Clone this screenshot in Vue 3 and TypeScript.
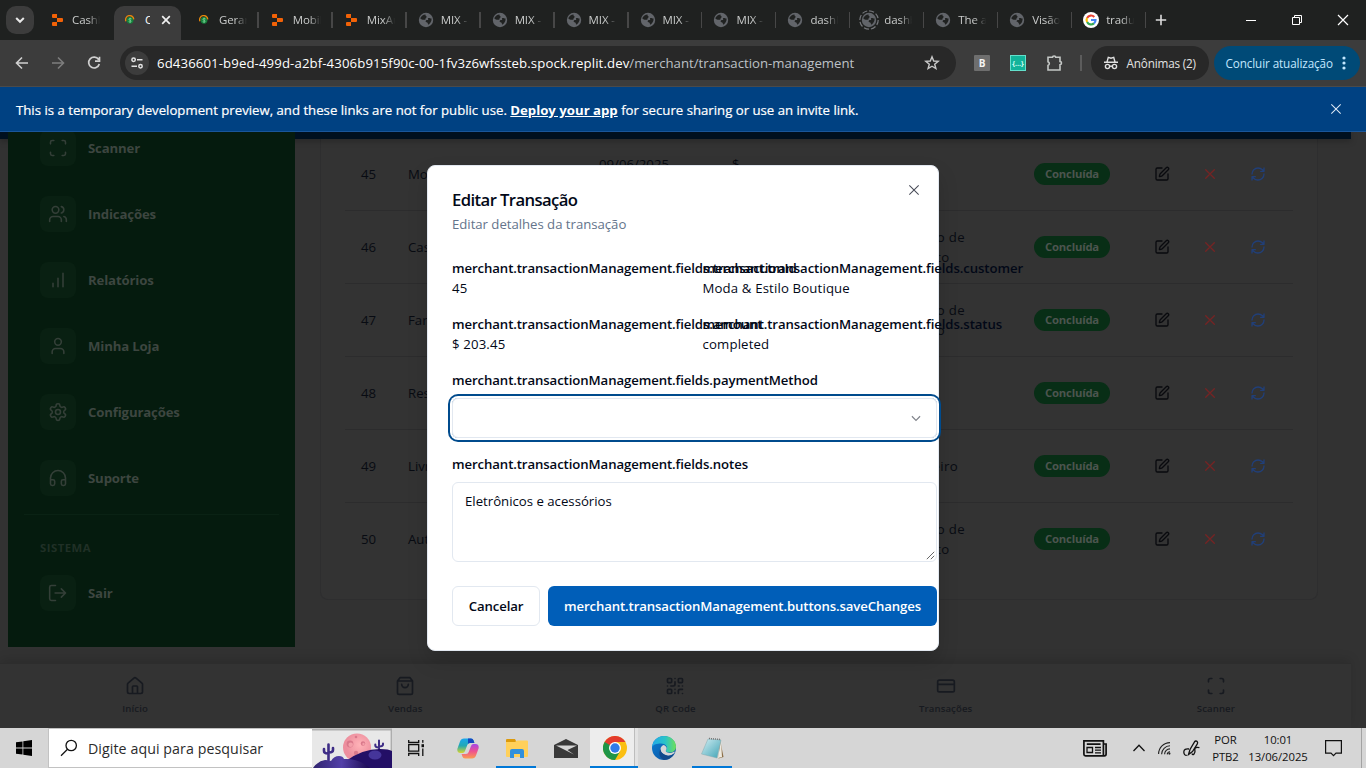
<script setup lang="ts">
interface Tab { icon: string; title: string; active?: boolean; ring?: boolean; noSep?: boolean }
interface Row { id: number; name: string; date?: string; amount?: string; method: string[] }

const icons: Record<string, string> = {
  scan: 'M3 7V5a2 2 0 0 1 2-2h2M17 3h2a2 2 0 0 1 2 2v2M21 17v2a2 2 0 0 1-2 2h-2M7 21H5a2 2 0 0 1-2-2v-2',
  users: 'M16 21v-2a4 4 0 0 0-4-4H6a4 4 0 0 0-4 4v2M13 7a4 4 0 1 1-8 0 4 4 0 1 1 8 0M22 21v-2a4 4 0 0 0-3-3.87M16 3.13a4 4 0 0 1 0 7.75',
  bars: 'M12 20V10M18 20V4M6 20v-4',
  user: 'M19 21v-2a4 4 0 0 0-4-4H9a4 4 0 0 0-4 4v2M16 7a4 4 0 1 1-8 0 4 4 0 1 1 8 0',
  settings: 'M12.22 2h-.44a2 2 0 0 0-2 2v.18a2 2 0 0 1-1 1.73l-.43.25a2 2 0 0 1-2 0l-.15-.08a2 2 0 0 0-2.73.73l-.22.38a2 2 0 0 0 .73 2.73l.15.1a2 2 0 0 1 1 1.72v.51a2 2 0 0 1-1 1.74l-.15.09a2 2 0 0 0-.73 2.73l.22.38a2 2 0 0 0 2.73.73l.15-.08a2 2 0 0 1 2 0l.43.25a2 2 0 0 1 1 1.73V20a2 2 0 0 0 2 2h.44a2 2 0 0 0 2-2v-.18a2 2 0 0 1 1-1.73l.43-.25a2 2 0 0 1 2 0l.15.08a2 2 0 0 0 2.73-.73l.22-.39a2 2 0 0 0-.73-2.73l-.15-.08a2 2 0 0 1-1-1.74v-.5a2 2 0 0 1 1-1.74l.15-.09a2 2 0 0 0 .73-2.73l-.22-.38a2 2 0 0 0-2.73-.73l-.15.08a2 2 0 0 1-2 0l-.43-.25a2 2 0 0 1-1-1.73V4a2 2 0 0 0-2-2zM15 12a3 3 0 1 1-6 0 3 3 0 1 1 6 0',
  headphones: 'M3 14h3a2 2 0 0 1 2 2v3a2 2 0 0 1-2 2H5a2 2 0 0 1-2-2v-7a9 9 0 0 1 18 0v7a2 2 0 0 1-2 2h-1a2 2 0 0 1-2-2v-3a2 2 0 0 1 2-2h3',
  exit: 'M9 3H4a2 2 0 0 0-2 2v14c0 1.1.9 2 2 2h5M16 17l5-5-5-5M20.8 12H8.5',
  house: 'M15 21v-8a1 1 0 0 0-1-1h-4a1 1 0 0 0-1 1v8M3 10a2 2 0 0 1 .709-1.528l7-5.999a2 2 0 0 1 2.582 0l7 5.999A2 2 0 0 1 21 10v9a2 2 0 0 1-2 2H5a2 2 0 0 1-2-2z',
  bag: 'M6 2 3 6v14a2 2 0 0 0 2 2h14a2 2 0 0 0 2-2V6l-3-4ZM3 6h18M16 10a4 4 0 0 1-8 0',
  qr: 'M4 3h3a1 1 0 0 1 1 1v3a1 1 0 0 1-1 1H4a1 1 0 0 1-1-1V4a1 1 0 0 1 1-1zM17 3h3a1 1 0 0 1 1 1v3a1 1 0 0 1-1 1h-3a1 1 0 0 1-1-1V4a1 1 0 0 1 1-1zM4 16h3a1 1 0 0 1 1 1v3a1 1 0 0 1-1 1H4a1 1 0 0 1-1-1v-3a1 1 0 0 1 1-1zM21 16h-3a2 2 0 0 0-2 2v3M21 21v.01M12 7v3a2 2 0 0 1-2 2H7M3 12h.01M12 3h.01M12 16v.01M16 12h1M21 12v.01M12 21v-1',
  card: 'M4 5h16a2 2 0 0 1 2 2v10a2 2 0 0 1-2 2H4a2 2 0 0 1-2-2V7a2 2 0 0 1 2-2zM2 10h20',
  pen: 'M12 3H5a2 2 0 0 0-2 2v14a2 2 0 0 0 2 2h14a2 2 0 0 0 2-2v-7M18.375 2.625a1 1 0 0 1 3 3l-9.013 9.014a2 2 0 0 1-.853.505l-2.873.84a.5.5 0 0 1-.62-.62l.84-2.873a2 2 0 0 1 .506-.852z',
  x: 'M18.500 5.500l-13 13M5.500 5.500l13 13',
  refresh: 'M3 12a9 9 0 0 1 9-9 9.75 9.75 0 0 1 6.74 2.74L21 8M21 3v5h-5M21 12a9 9 0 0 1-9 9 9.75 9.75 0 0 1-6.74-2.74L3 16M8 16H3v5',
}

const tabs: Tab[] = [
  { icon: 'replit', title: 'Cashback', noSep: true },
  { icon: 'coin', title: 'Ca', active: true },
  { icon: 'coin', title: 'Gerar' },
  { icon: 'replit', title: 'Mobile' },
  { icon: 'replit', title: 'MixAuto' },
  { icon: 'globe', title: 'MIX - A' },
  { icon: 'globe', title: 'MIX - A' },
  { icon: 'globe', title: 'MIX - A' },
  { icon: 'globe', title: 'MIX - A' },
  { icon: 'globe', title: 'MIX - A' },
  { icon: 'globe', title: 'dashboard' },
  { icon: 'globe', title: 'dashboard', ring: true },
  { icon: 'globe', title: 'The app' },
  { icon: 'globe', title: 'Visão' },
  { icon: 'google', title: 'tradutor' },
]

const menu = [
  { icon: 'scan', label: 'Scanner' },
  { icon: 'users', label: 'Indicações' },
  { icon: 'bars', label: 'Relatórios' },
  { icon: 'user', label: 'Minha Loja' },
  { icon: 'settings', label: 'Configurações' },
  { icon: 'headphones', label: 'Suporte' },
]

const rows: Row[] = [
  { id: 45, name: 'Moda & Estilo', date: '09/06/2025', amount: '$', method: ['Pix'] },
  { id: 46, name: 'Casa', method: ['Cartão de', 'Crédito'] },
  { id: 47, name: 'Farmácia', method: ['Cartão de', 'Débito'] },
  { id: 48, name: 'Restaurante', method: ['Pix'] },
  { id: 49, name: 'Livraria', method: ['Dinheiro'] },
  { id: 50, name: 'Auto', method: ['Cartão de', 'Crédito'] },
]

const bottomNav = [
  { icon: 'house', label: 'Início' },
  { icon: 'bag', label: 'Vendas' },
  { icon: 'qr', label: 'QR Code' },
  { icon: 'card', label: 'Transações' },
  { icon: 'scan', label: 'Scanner' },
]

const prefix = 'merchant.transactionManagement.'
const details = [
  { label: 'fields.transactionId', value: '45' },
  { label: 'fields.customer', value: 'Moda & Estilo Boutique' },
  { label: 'fields.amount', value: '$ 203.45' },
  { label: 'fields.status', value: 'completed' },
]
const notes = 'Eletrônicos e acessórios'
</script>

<template>
  <div class="screen">
    <!-- Tab strip -->
    <header class="tabstrip">
      <div class="tabsearch">
        <svg width="12" height="12" viewBox="0 0 12 12" fill="none" stroke="#e8e8e8" stroke-width="2"><path d="M2.2 4 6 7.8 9.8 4" /></svg>
      </div>
      <div class="tabs">
        <div v-for="(t, i) in tabs" :key="i" class="tab" :class="{ active: t.active, nosep: t.noSep || t.active }">
          <span class="fav">
            <svg v-if="t.icon === 'replit'" width="11" height="12" viewBox="0 0 11 12" fill="#f26207"><path d="M1 0h4v4H1a1 1 0 0 1-1-1V1a1 1 0 0 1 1-1zM5 4h5a1 1 0 0 1 1 1v2a1 1 0 0 1-1 1H5zM1 8h4v4H1a1 1 0 0 1-1-1V9a1 1 0 0 1 1-1z" /></svg>
            <svg v-else-if="t.icon === 'coin'" width="10" height="10" viewBox="0 0 10 10" fill="none"><circle cx="5" cy="5.300" r="3.400" fill="#16803c" /><path d="M.9 6.200a4.100 4.100 0 1 1 7.900-1.800" stroke="#e8880c" stroke-width="1.300" /><path d="M6.500 3.900C5.200 3 3.800 3.600 4 4.600c.3.900 2 .6 2.200 1.500.1 1-1.300 1.200-2.500.500M5.100 2.700v5.100" stroke="#7fd69b" stroke-width=".8" /></svg>
            <svg v-else-if="t.icon === 'globe'" width="20" height="20" viewBox="0 0 20 20" fill="none">
              <circle cx="10" cy="10" r="7.200" fill="#62656a" />
              <path d="M4.200 8.300c1.200-2.600 3-3.700 5.300-3.900-.2 1.500.9 1.500 1.200 2.300.2.900-1.300 1-1.200 2.200.1 1-1.700.9-2.800.8-1.200-.1-1.600-.8-2.500-1.400zM12 8.300c1.400-.6 1.900.3 3.600.3.100 3.200-1.400 5-3.400 6.200-.5-1.200-.1-1.900-1-2.400-.9-.4-1.800-.3-1.500-1.500.3-1 1.500-.5 2.300-.8.6-.3-.3-1.400 0-1.800z" fill="#202221" />
              <circle v-if="t.ring" cx="10" cy="10" r="9.200" stroke="#75777b" stroke-width="1.200" stroke-dasharray="5.200 2" />
            </svg>
            <svg v-else width="16" height="16" viewBox="0 0 16 16" fill="none"><circle cx="8" cy="8" r="8" fill="#fff" /><g stroke-width="2.200"><path d="M11.300 4.900A4.500 4.500 0 0 0 4.100 5.900" stroke="#ea4335" /><path d="M4.100 5.900a4.500 4.500 0 0 0 0 4.200" stroke="#fbbc05" /><path d="M4.100 10.100a4.500 4.500 0 0 0 6.900 1.300" stroke="#34a853" /><path d="M11 11.400A4.300 4.300 0 0 0 12.500 8H8" stroke="#4285f4" /></g></svg>
          </span>
          <span class="tabtitle">{{ t.title }}</span>
          <svg v-if="t.active" class="tabclose" width="10" height="10" viewBox="0 0 10 10" stroke="#f0f0f0" stroke-width="1.700"><path d="m1.200 1.200 7.600 7.600M8.800 1.200 1.200 8.800" /></svg>
        </div>
      </div>
      <svg class="plus" width="12" height="12" viewBox="0 0 12 12" stroke="#dcdcdc" stroke-width="1.600"><path d="M6 .8v10.400M.8 6h10.400" /></svg>
      <div class="winctl">
        <svg width="12" height="12" viewBox="0 0 12 12" stroke="#fff" fill="none"><path d="M1 6.500h10" /></svg>
        <svg width="12" height="12" viewBox="0 0 12 12" stroke="#fff" fill="none"><path d="M1.500 3.500h7v7h-7zM3.500 3.500v-2h7v7h-2" /></svg>
        <svg width="12" height="12" viewBox="0 0 12 12" stroke="#fff" stroke-width="1.200" fill="none"><path d="m1 1 10 10M11 1 1 11" /></svg>
      </div>
    </header>

    <!-- Address bar -->
    <div class="toolbar">
      <div class="navbtns">
        <svg width="16" height="16" viewBox="0 0 16 16" fill="none" stroke="#d0d0d0" stroke-width="1.600"><path d="M14 8H3M8 2.500 2.500 8 8 13.500" /></svg>
        <svg width="16" height="16" viewBox="0 0 16 16" fill="none" stroke="#7d7d7d" stroke-width="1.600"><path d="M2 8h11M8 2.500 13.500 8 8 13.500" /></svg>
        <svg width="16" height="16" viewBox="0 0 16 16" fill="none" stroke="#d0d0d0" stroke-width="1.700"><path d="M12.600 4.600A5.400 5.400 0 1 0 13.300 9M13.500 1.800v4.400H9" /></svg>
      </div>
      <div class="omnibox">
        <span class="tune">
          <svg width="14" height="14" viewBox="0 0 14 14" fill="none" stroke="#e3e3e3" stroke-width="1.500"><circle cx="3.600" cy="3.800" r="1.700" /><path d="M7 3.800h5.500M1.500 10.200H7" /><circle cx="10.500" cy="10.200" r="1.700" /></svg>
        </span>
        <span class="url"><b>6d436601-b9ed-499d-a2bf-4306b915f90c-00-1fv3z6wfssteb.spock.replit.dev</b>/merchant/transaction-management</span>
        <svg class="star" width="16" height="16" viewBox="0 0 16 16" fill="none" stroke="#c8c8c8" stroke-width="1.400"><path d="m8 1.800 1.700 4.200 4.500.3-3.500 2.900 1.200 4.400L8 11.200l-3.900 2.400 1.200-4.400-3.500-2.900 4.500-.3z" /></svg>
      </div>
      <div class="exts">
        <span class="extb">B</span>
        <span class="extj">{...}</span>
        <svg width="18" height="18" viewBox="0 0 18 18" fill="none" stroke="#c4c7c5" stroke-width="1.600"><path d="M2 3.300h4.500a1.600 1.300 0 0 1 3.200 0h4.300v4.200a1.500 1.600 0 0 1 0 3.200v5.300H2v-4.600a2 1.900 0 0 0 0-3.600z" /></svg>
      </div>
      <i class="vsep"></i>
      <div class="incog">
        <svg width="16" height="16" viewBox="0 0 16 16" fill="none" stroke="#e0e0e0" stroke-width="1.400"><path d="M1 7.200h14M4 7l1.300-4.600 2.700.8 2.700-.8L12 7" /><circle cx="4.500" cy="11.500" r="2.100" /><circle cx="11.500" cy="11.500" r="2.100" /><path d="M6.600 11.200h2.800" /></svg>
        <span>Anônimas (2)</span>
      </div>
      <div class="update"><span>Concluir atualização</span>
        <svg width="4" height="16" viewBox="0 0 4 16" fill="#c2e7ff"><circle cx="2" cy="3" r="1.600" /><circle cx="2" cy="8" r="1.600" /><circle cx="2" cy="13" r="1.600" /></svg>
      </div>
    </div>

    <!-- Preview banner -->
    <div class="banner">
      <span>This is a temporary development preview, and these links are not for public use. <a>Deploy your app</a> for secure sharing or use an invite link.</span>
      <svg width="16" height="16" viewBox="0 0 24 24" fill="none" stroke="#dce8f5" stroke-width="1.800"><path d="M20 4 4 20M4 4l16 16" /></svg>
    </div>

    <!-- Dimmed page -->
    <div class="page">
      <div class="topline"></div>
      <aside class="sidebar">
        <div v-for="m in menu" :key="m.label" class="mitem">
          <span class="mbox"><svg width="20" height="20" viewBox="0 0 24 24" class="stroke"><path :d="icons[m.icon]" /></svg></span>
          <span>{{ m.label }}</span>
        </div>
        <hr />
        <h4>SISTEMA</h4>
        <div class="mitem">
          <span class="mbox"><svg width="20" height="20" viewBox="0 0 24 24" class="stroke"><path :d="icons.exit" /></svg></span>
          <span>Sair</span>
        </div>
      </aside>
      <main class="card">
        <div v-for="r in rows" :key="r.id" class="row">
          <span>{{ r.id }}</span>
          <span>{{ r.name }}</span>
          <span>{{ r.date }}<br v-if="r.date" />&nbsp;</span>
          <span>{{ r.amount }}<br v-if="r.amount" />&nbsp;</span>
          <span class="method"><template v-for="(l, i) in r.method" :key="l"><br v-if="i" />{{ l }}</template></span>
          <span><em class="badge">Concluída</em></span>
          <span class="acts">
            <svg width="16" height="16" viewBox="0 0 24 24" class="stroke edit"><path :d="icons.pen" /></svg>
            <svg width="16" height="16" viewBox="0 0 24 24" class="stroke del"><path :d="icons.x" /></svg>
            <svg width="16" height="16" viewBox="0 0 24 24" class="stroke ref"><path :d="icons.refresh" /></svg>
          </span>
        </div>
      </main>
      <nav class="bottomnav">
        <div v-for="n in bottomNav" :key="n.label">
          <svg width="20" height="20" viewBox="0 0 24 24" class="stroke"><path :d="icons[n.icon]" /></svg>
          <span>{{ n.label }}</span>
        </div>
      </nav>
    </div>

    <!-- Edit dialog -->
    <section class="dialog">
      <svg class="dclose" width="16" height="16" viewBox="0 0 24 24" fill="none" stroke="#4a4d5a" stroke-width="1.800"><path d="M20 4 4 20M4 4l16 16" /></svg>
      <h2>Editar Transação</h2>
      <p class="desc">Editar detalhes da transação</p>
      <div class="details">
        <div v-for="d in details" :key="d.label">
          <label>{{ prefix }}{{ d.label }}</label>
          <p>{{ d.value }}</p>
        </div>
      </div>
      <label class="solo">{{ prefix }}fields.paymentMethod</label>
      <div class="select">
        <svg width="16" height="16" viewBox="0 0 24 24" fill="none" stroke="#80838b" stroke-width="2"><path d="m5 9 7 7 7-7" /></svg>
      </div>
      <label class="solo">{{ prefix }}fields.notes</label>
      <div class="notes">{{ notes }}
        <svg width="9" height="9" viewBox="0 0 9 9" stroke="#555" stroke-width=".9"><path d="M.8 8.200 8.200.8M4.800 8.200l3.400-3.400" /></svg>
      </div>
      <footer>
        <button class="cancel">Cancelar</button>
        <button class="save">{{ prefix }}buttons.saveChanges</button>
      </footer>
    </section>

    <!-- Taskbar -->
    <div class="taskbar">
      <div class="start"><svg width="16" height="16" viewBox="0 0 16 16"><path d="M0 2.300 6.500 1.400v6.200H0zM7.300 1.300 16 0v7.600H7.300zM0 8.400h6.500v6.200L0 13.700zM7.300 8.400H16V16l-8.700-1.300z" /></svg></div>
      <div class="search">
        <svg width="18" height="18" viewBox="0 0 18 18" fill="none" stroke="#111" stroke-width="1.300"><circle cx="11.200" cy="6.500" r="5.200" /><path d="M7.500 10.300 1 16.800" /></svg>
        <span>Digite aqui para pesquisar</span>
        <svg class="scene" width="80" height="39" viewBox="0 0 80 39">
          <defs>
            <radialGradient id="moon" cx=".6" cy=".4"><stop offset="0" stop-color="#ffb3b8" /><stop offset="1" stop-color="#ed8f9e" /></radialGradient>
            <linearGradient id="hill"><stop offset="0" stop-color="#30246f" /><stop offset=".5" stop-color="#5340a8" /><stop offset="1" stop-color="#1b0951" /></linearGradient>
          </defs>
          <path d="M0 0h80v39H0z" fill="#e8e8e8" /><path d="M0 .7h79.300V39" fill="none" stroke="#adadad" stroke-width="1.400" />
          <circle cx="45" cy="18.500" r="14" fill="url(#moon)" />
          <g fill="#d9788b"><circle cx="38" cy="15" r="3.400" /><circle cx="51" cy="14.500" r="2.200" /><circle cx="44" cy="8" r="1.300" /><circle cx="44" cy="24" r="2.200" /></g>
          <g fill="#f4a0aa"><circle cx="38.700" cy="15.800" r="2.300" /><circle cx="51.500" cy="15" r="1.200" /></g>
          <g fill="none" stroke="#3e2d86" stroke-width="3" stroke-linecap="round"><path d="M16.500 15.500V31M12 20v2q0 2.500 4 2.500M21 19v2q0 2.500-4 2.500" stroke-width="2.600" /><path d="M67 11.500V24M63.300 15.500v1q0 2 3.700 2M71 14.500v1q0 2-4 2" stroke-width="2" /></g>
          <path d="M34 32Q50 20 68 20q9 0 12 2v17H34z" fill="#230f66" />
          <ellipse cx="63" cy="26" rx="6.500" ry="4.500" fill="#45359a" />
          <path d="M1 39q5-7 12-8 4 0 6 1 3-5 8-5 4 0 5 3 14-1 26 9z" fill="url(#hill)" />
        </svg>
      </div>
      <div class="apps">
        <span class="app view"><svg width="16" height="16" viewBox="0 0 16 16" fill="none" stroke="#111" stroke-width="1.300"><path d="M.7 0v2.500h10V0M.7 16v-2.500h10V16M.7 4.700h10v6.500H.7zM14.800 0v2.800M14.800 8.500V16" /><path d="M13.500 4.200H16v3h-2.500z" fill="#111" stroke="none" /></svg></span>
        <span class="app">
          <svg width="22" height="21" viewBox="0 0 22 21">
            <defs>
              <linearGradient id="cpA" x1="0" y1="0" x2="0" y2="1"><stop offset="0" stop-color="#1aa7ee" /><stop offset=".5" stop-color="#22a8b4" /><stop offset="1" stop-color="#d8d52c" /></linearGradient>
              <linearGradient id="cpB" x1="0" y1="0" x2="0" y2="1"><stop offset="0" stop-color="#a646e8" /><stop offset=".5" stop-color="#ee5290" /><stop offset="1" stop-color="#fb9c50" /></linearGradient>
            </defs>
            <path d="M7 .5h7q2 0 2.600 2L17.400 5H13q-2 0-2.700 2L8 13q-.6 2-2.500 2H3.500Q0 15 .3 11L3 3.500Q4 .5 7 .5z" fill="url(#cpA)" />
            <path d="M11 .5h3q2 0 2.600 2L17.400 5H13q-1.500 0-2 1z" fill="#1548bf" />
            <path d="M15 20.500H8q-2 0-2.600-2L4.600 16H9q2 0 2.700-2L14 8q.6-2 2.500-2h2q3.500 0 3.200 4L19 17.500q-1 3-4 3z" fill="url(#cpB)" />
          </svg>
        </span>
        <span class="app open">
          <svg width="22" height="19" viewBox="0 0 22 19"><path d="M0 1q0-1 1-1h8l1.500 3H0z" fill="#dc9a0c" /><path d="M0 3h9l2-1.500h10q1 0 1 1V17q0 1-1 1H1q-1 0-1-1z" fill="#ffd05a" /><path d="M4 19v-7q0-2 2-2h10q2 0 2 2v7h-4v-4H8v4z" fill="#3190dc" /></svg>
        </span>
        <span class="app"><svg width="24" height="19" viewBox="0 0 24 19"><path d="M0 6 12 0l12 6v13H0z" fill="#393939" /><path d="M2 6.500h21L13.500 11l6.500 4.500z" fill="#d6d6d6" /></svg></span>
        <span class="app current open">
          <svg width="24" height="24" viewBox="0 0 24 24"><circle cx="12" cy="12" r="12" fill="#fbbf12" /><path d="M1.600 6A12 12 0 0 1 22.400 6H12L7 14.500z" fill="#e33b2e" /><path d="M1.600 6A12 12 0 0 0 12 24l5.200-9L12 17z" fill="#1e9547" /><path d="M1.600 6 7 15l5-3z" fill="#1e9547" /><circle cx="12" cy="12" r="6" fill="#fff" /><circle cx="12" cy="12" r="4.700" fill="#2f7bea" /></svg>
        </span>
        <span class="app">
          <svg width="24" height="24" viewBox="0 0 24 24">
            <defs>
              <linearGradient id="eA"><stop offset="0" stop-color="#23a9e8" /><stop offset=".55" stop-color="#2ac3c8" /><stop offset="1" stop-color="#6ee058" /></linearGradient>
              <linearGradient id="eB" x1="0" y1="0" x2="1" y2="1"><stop offset="0" stop-color="#0c7fd4" /><stop offset="1" stop-color="#0b4f9c" /></linearGradient>
            </defs>
            <circle cx="12" cy="12" r="12" fill="url(#eB)" />
            <path d="M0 11C1 4 6 0 12 0c7 0 12 5 12 10.500 0 4-3 6-6.500 6-3 0-4.300-1.200-3.500-2.400 2.500-3-.5-6.600-5-6.600C5 7.500 1.200 8.500 0 11z" fill="url(#eA)" />
            <path d="M8.500 13c.2-2 1.500-3.600 3.300-4 2.600 1 3.600 3.500 2.200 5.100-.8 1.200.5 2.900 3.500 2.900 2 0 3.800-.6 5-1.500.3.300.2 1-.3 1.800-2 2.200-5 2.700-7.200 2.200C11 18.600 8.500 16 8.500 13z" fill="#d6d6d6" />
            <path d="M8.500 13c0 3 2.500 5.600 6.500 6.500 2.200.5 5.200 0 7.200-2.200C20 21.500 16 24 12 24c-4-2-6-6-3.500-11z" fill="#114a8b" />
          </svg>
        </span>
        <span class="app open">
          <svg width="24" height="22" viewBox="0 0 24 22"><defs><linearGradient id="np" x1="0" y1="0" x2="1" y2="1"><stop offset="0" stop-color="#d3eef3" /><stop offset="1" stop-color="#3fa3b5" /></linearGradient></defs><path d="M19 2l3.500 18-5 1.500z" fill="#8d7049" /><path d="M20 3l1 17-4 1z" fill="#eeeae0" /><path d="M7 2l13 1-4 18L.5 17z" fill="url(#np)" stroke="#84aab1" stroke-width=".5" /><path d="M8 1.500l12 1" stroke="#767676" stroke-width="1.500" stroke-dasharray="1 1" /></svg>
        </span>
      </div>
      <div class="tray">
        <svg class="t1" width="24" height="17" viewBox="0 0 24 17" fill="none" stroke="#111" stroke-width="1.700"><path d="M.9.900h19.500v15H2.500q-1.600 0-1.600-1.600zM20.400 4h2.700v10q0 1.900-1.700 1.900h-3M3.800 4.200h13.800" /><path d="M4 7.500h5.500v5H4zM12 7.500h6M12 10.200h6M12 12.800h6" stroke-width="1.300" /></svg>
        <svg class="t2" width="12" height="8" viewBox="0 0 12 8" fill="none" stroke="#111" stroke-width="1.300"><path d="M.5 7 6 1.300 11.500 7" /></svg>
        <svg class="t3" width="13" height="13" viewBox="0 0 13 13" fill="none" stroke="#222" stroke-width="1.100"><path d="M.6 12A11.500 11.500 0 0 1 12 .6M3.600 12.200A8.500 8.500 0 0 1 12 3.800M6.600 12.200A5.500 5.500 0 0 1 12 6.900M9.200 12.400A3 3 0 0 1 12 9.700" /><circle cx="11.400" cy="11.600" r="1.100" fill="#222" stroke="none" /></svg>
        <svg class="t4" width="17" height="17" viewBox="0 0 17 17" fill="none" stroke="#111" stroke-width="1.300"><path d="M5.500 14.500 7 9.500l4.500-7.700q1.300-1.500 2.700-.2.900 1.200 0 2.500L9.500 11.500zM6 9Q1 8.200.8 12q.2 3.500 3 3.300M9 13.500q.5 2 2 .5 1.500-2 .8-5.500 1.700-1.800 4.600-.8" /></svg>
        <div class="clock lang"><span>POR</span><span>PTB2</span></div>
        <div class="clock time"><span>10:01</span><span>13/06/2025</span></div>
        <svg class="t5" width="17" height="17" viewBox="0 0 17 17" fill="none" stroke="#111" stroke-width="1.200"><path d="M.6.600h15.800v12.500H11l-2.500 2.600L6 13.100H.6z" /></svg>
        <i></i>
      </div>
    </div>
  </div>
</template>

<style>
body { margin: 0; overflow: hidden; }
</style>

<style scoped>
* { box-sizing: border-box; }
.screen {
  position: relative; width: 1366px; height: 768px; overflow: hidden;
  display: flex; flex-direction: column; background: #333;
  font-family: "Open Sans", "Noto Sans", sans-serif; font-size: 13.2px; color: #020817;
}
svg { display: block; flex: none; }
h2, h4, p { margin: 0; }
.stroke { fill: none; stroke: currentColor; stroke-width: 2; stroke-linecap: round; stroke-linejoin: round; }

.tabstrip { height: 40px; flex: none; display: flex; align-items: center; background: #1f2120; }
.tabsearch { width: 28px; height: 28px; margin-left: 6px; border-radius: 10px; background: #3c3c3c; display: flex; align-items: center; justify-content: center; }
.tabs { display: flex; height: 40px; margin-left: 3px; width: 1108px; }
.tab { position: relative; flex: 1 1 0; min-width: 0; display: flex; align-items: center; padding-left: 10px; font-size: 11.500px; letter-spacing: -.1px; color: #c9cbca; }
.tab::after { content: ""; position: absolute; right: -1px; top: 12px; width: 1.500px; height: 16px; background: #474747; }
.tab.nosep::after { display: none; }
.fav { width: 20px; display: flex; justify-content: center; }
.tabtitle { margin-left: 5px; width: 29px; overflow: hidden; white-space: nowrap; line-height: 16px; -webkit-mask-image: linear-gradient(90deg, #000 55%, transparent 97%); mask-image: linear-gradient(90deg, #000 55%, transparent 97%); }
.tab.active { z-index: 1; padding-left: 9px; color: #fff; }
.tab.active::before { content: ""; position: absolute; z-index: -1; left: 3px; right: 3px; top: 6px; bottom: 0; border-radius: 10px 10px 0 0; background: #3c3c3c; }
.tab.active .tabtitle { width: 5px; -webkit-mask-image: none; mask-image: none; }
.tabclose { margin-left: 11px; }
.plus { margin-left: 10px; }
.winctl { margin-left: auto; margin-right: 17px; display: flex; gap: 34px; }

.toolbar { height: 47px; flex: none; display: flex; align-items: center; background: #3c3c3c; border-bottom: 1px solid #4a4a4a; color: #e3e3e3; }
.navbtns { display: flex; gap: 20px; margin-left: 14px; width: 106px; flex: none; }
.omnibox { width: 836px; flex: none; height: 34px; border-radius: 17px; background: #282828; display: flex; align-items: center; }
.tune { width: 24px; height: 24px; margin-left: 5px; border-radius: 12px; background: #3c3c3c; display: flex; align-items: center; justify-content: center; }
.url { margin-left: 8px; white-space: nowrap; color: #bdc1c6; }
.url b { font-weight: 400; color: #fff; letter-spacing: .11px; }
.star { margin-left: auto; margin-right: 16px; }
.exts { display: flex; align-items: center; gap: 20px; margin-left: 18px; }
.extb, .extj { width: 16px; height: 16px; display: flex; align-items: center; justify-content: center; font-weight: 700; }
.extb { background: #6e6e6e; border-radius: 1px; font-size: 10px; color: #f4f4f4; }
.extj { background: #12b39a; border: 1px solid #63dfcb; font-size: 7px; color: #d8fff8; }
.vsep { width: 1.500px; height: 16px; margin-left: 16px; background: #5c5c5c; }
.incog { margin-left: 9px; width: 118px; height: 34px; border-radius: 17px; background: #282828; display: flex; align-items: center; padding-left: 12px; gap: 8px; font-size: 11.700px; letter-spacing: -.15px; white-space: nowrap; }
.update { margin-left: 5px; width: 146px; height: 34px; border-radius: 17px; background: #004a77; display: flex; align-items: center; justify-content: space-between; padding: 0 14px 0 12px; color: #c2e7ff; font-size: 11.700px; letter-spacing: -.1px; white-space: nowrap; }

.banner { height: 45px; flex: none; display: flex; align-items: center; justify-content: space-between; padding: 0 22px 0 16px; background: #004182; border-bottom: 1px solid #1a569a; color: #fff; font-weight: 500; white-space: nowrap; -webkit-text-stroke: .2px #fff; }
.banner span { padding-top: 2px; }
.banner svg { width: 14px; height: 14px; margin-right: 1px; }
.banner a { font-weight: 700; text-decoration: underline; -webkit-text-stroke: 0; }

.page { position: relative; height: 596px; flex: none; overflow: hidden; display: flex; align-items: flex-start; background: #323232; }
.topline { position: absolute; z-index: 1; left: 0; top: 0; width: 1351px; height: 7px; background: #00101f; box-shadow: 0 2px 6px rgba(0, 0, 0, .25); }
.sidebar { position: relative; z-index: 2; width: 287px; height: 515px; margin-left: 8px; overflow: hidden; background: #051b0e; color: #3d4640; font-weight: 700; letter-spacing: -.15px; }
.mitem { display: flex; align-items: center; gap: 12px; height: 36px; margin: 0 0 30px 32px; }
.mitem:first-child { margin-top: -2px; }
.mbox { width: 36px; height: 36px; border-radius: 8px; background: #092012; display: flex; align-items: center; justify-content: center; color: #343f38; }
.mbox svg { stroke-width: 1.900; }
.sidebar hr { margin: -12px 16px 0; border: 0; height: 1px; background: #0a2214; }
.sidebar h4 { margin: 24px 0 19px 32px; font-size: 11.300px; line-height: 17px; font-weight: 700; letter-spacing: .5px; color: #203026; }
.card { width: 998px; height: 468px; margin-left: 25px; padding: 6px 24px 0; border: 1px solid #2e2e2f; border-top: 0; border-radius: 0 0 8px 8px; background: #333; color: #080b12; }
.row { display: grid; grid-template-columns: 47px 191px 133px 169px 133px 120px 1fr; align-items: center; height: 73px; border-bottom: 1px solid #2c2c2d; line-height: 20px; white-space: nowrap; }
.row:last-child { height: 72px; border: 0; }
.row > span { padding-left: 16px; }
.row > .method { padding-left: 17px; letter-spacing: .35px; }
.badge { display: inline-flex; align-items: center; justify-content: center; vertical-align: middle; width: 76px; height: 22px; border-radius: 11px; background: #082e16; color: #4c554f; font-style: normal; font-weight: 700; font-size: 11.300px; letter-spacing: -.2px; }
.acts { display: flex; gap: 32px; }
.edit { color: #090a0e; }
.del { color: #742424; }
.ref { color: #213f78; }
.bottomnav { position: absolute; z-index: 1; left: 0; bottom: 0; width: 1351px; height: 65px; display: grid; grid-template-columns: repeat(5, 1fr); background: #333; border-top: 1px solid #2d2d2d; box-shadow: 0 -4px 10px rgba(0, 0, 0, .12); color: #171a20; }
.bottomnav div { display: flex; flex-direction: column; align-items: center; padding-top: 12px; font-size: 9.600px; font-weight: 600; line-height: 14px; gap: 6px; letter-spacing: .1px; }

.dialog { position: absolute; z-index: 3; left: 427px; top: 165px; width: 512px; height: 486px; border: 1px solid #e2e8f0; border-radius: 8px; background: #fff; padding: 24px; box-shadow: 0 10px 20px rgba(0, 0, 0, .15); white-space: nowrap; line-height: 20px; }
.dialog > * { width: 485px; }
.dialog .dclose { position: absolute; right: 17px; top: 17px; width: 14px; height: 14px; }
.dialog h2 { font-size: 16.700px; line-height: 20px; font-weight: 600; letter-spacing: -.6px; }
.desc { margin-top: 4px; color: #64748b; letter-spacing: -.03px; }
.details { display: grid; grid-template-columns: 1fr 1fr; gap: 16px; margin-top: 24px; }
.details > div { min-width: 0; }
.details p { letter-spacing: .15px; }
label { display: block; font-weight: 600; letter-spacing: -.1px; }
.details + .solo { margin-top: 16px; }
.select { height: 40px; margin-top: 8px; border: 1px solid #e2e8f0; border-radius: 6px; box-shadow: 0 0 0 2px #fff, 0 0 0 4px #004b8d; display: flex; align-items: center; justify-content: flex-end; padding-right: 13px; }
.select svg { width: 14px; height: 14px; }
.select + .solo { margin-top: 16px; }
.notes { position: relative; height: 80px; margin-top: 8px; border: 1px solid #e2e8f0; border-radius: 6px; padding: 8px 12px; }
.notes svg { position: absolute; right: 1px; bottom: 1px; }
footer { display: flex; gap: 8px; margin-top: 24px; }
button { height: 40px; padding: 0; border-radius: 6px; font: inherit; font-weight: 600; letter-spacing: -.12px; color: #020817; }
.cancel { width: 88px; border: 1px solid #e2e8f0; background: #fff; }
.save { width: 389px; border: 0; background: #005eb8; color: #fff; }

.taskbar { height: 40px; flex: none; display: flex; background: #d6d6d6; color: #111; }
.start { width: 48px; display: flex; align-items: center; justify-content: center; }
.search { width: 344px; height: 40px; border: 1px solid #c2c2c2; border-right: 0; background: #fff; display: flex; align-items: center; padding-left: 11px; font-size: 14.200px; letter-spacing: .08px; color: #2b2b2b; }
.search span { margin-left: 10px; white-space: nowrap; }
.scene { margin-left: auto; align-self: flex-start; }
.apps { display: flex; width: 345px; padding-left: 2px; }
.app { position: relative; width: 49px; flex: none; display: flex; align-items: center; justify-content: center; }
.app.view { padding-right: 5px; }
.app.open::after { content: ""; position: absolute; left: 4px; right: 5px; bottom: 0; height: 2px; background: #0078d7; }
.app.current { background: linear-gradient(90deg, #ededed 44px, #bdbdbd 44px, #bdbdbd 45px, #e2e2e2 45px, #e2e2e2 48px, #d6d6d6 48px); }
.app.current.open::after { left: 0; right: 1px; }
.tray { flex: 1; display: flex; align-items: center; padding-left: 346px; }
.t2 { margin-left: 26px; }
.t3 { margin-left: 13px; }
.t4 { margin-left: 12px; }
.clock { display: flex; flex-direction: column; align-items: center; font-size: 11.300px; letter-spacing: -.05px; line-height: 17px; white-space: nowrap; }
.lang { width: 27px; margin-left: 12px; }
.time { width: 60px; margin-left: 9px; }
.t5 { margin-left: 17px; }
.tray i { width: 1px; height: 40px; margin-left: 19px; background: #a3a3a3; }
</style>
